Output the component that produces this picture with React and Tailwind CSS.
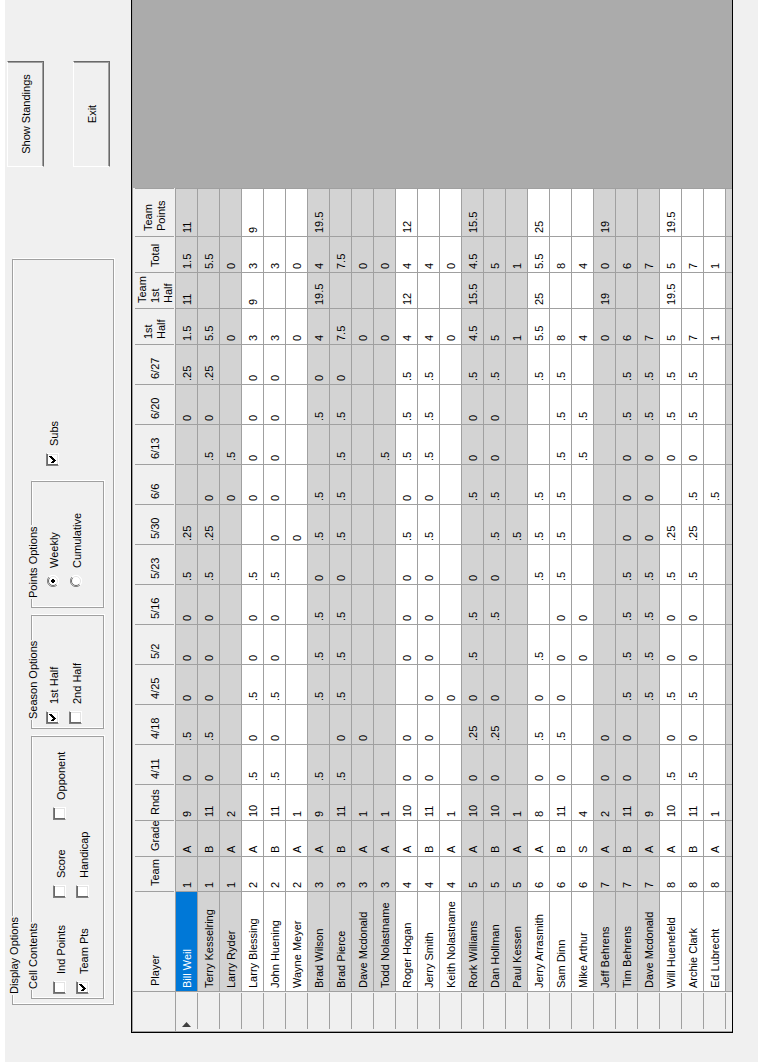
import React from 'react';

const HEADERS = [
  'Player', 'Team', 'Grade', 'Rnds', '4/11', '4/18', '4/25', '5/2', '5/16', '5/23', '5/30',
  '6/6', '6/13', '6/20', '6/27', '1st\nHalf', 'Team\n1st\nHalf', 'Total', 'Team\nPoints',
];

// name | team | grade | rounds | eleven weekly scores | half total | team total
const ROWS = [
  'Bill Weil|1|A|9|0,.5,0,0,0,.5,.25,,,0,.25|1.5|11',
  'Terry Kesselring|1|B|11|0,.5,0,0,0,.5,.25,0,.5,0,.25|5.5|',
  'Larry Ryder|1|A|2|,,,,,,,0,.5,,|0|',
  'Larry Blessing|2|A|10|.5,0,.5,0,0,.5,,0,0,0,0|3|9',
  'John Huening|2|B|11|.5,0,.5,0,0,.5,0,0,0,0,0|3|',
  'Wayne Meyer|2|A|1|,,,,,,0,,,,|0|',
  'Brad Wilson|3|A|9|.5,,.5,.5,.5,0,.5,.5,,.5,0|4|19.5',
  'Brad Pierce|3|B|11|.5,0,.5,.5,.5,0,.5,.5,.5,.5,0|7.5|',
  'Dave Mcdonald|3|A|1|,0,,,,,,,,,|0|',
  'Todd Nolastname|3|A|1|,,,,,,,,.5,,|0|',
  'Roger Hogan|4|A|10|0,0,,0,0,0,.5,0,.5,.5,.5|4|12',
  'Jerry Smith|4|B|11|0,0,0,0,0,0,.5,0,.5,.5,.5|4|',
  'Keith Nolastname|4|A|1|,,0,,,,,,,,|0|',
  'Rork Williams|5|A|10|0,.25,0,.5,.5,0,,.5,0,0,.5|4.5|15.5',
  'Dan Hollman|5|B|10|0,.25,0,,.5,0,.5,.5,0,0,.5|5|',
  'Paul Kessen|5|A|1|,,,,,,.5,,,,|1|',
  'Jerry Arrasmith|6|A|8|0,.5,0,.5,,.5,.5,.5,,,.5|5.5|25',
  'Sam Dinn|6|B|11|0,.5,0,0,0,.5,.5,.5,.5,.5,.5|8|',
  'Mike Arthur|6|S|4|,,,0,0,,,,.5,.5,|4|',
  'Jeff Behrens|7|A|2|0,0,,,,,,,,,|0|19',
  'Tim Behrens|7|B|11|0,0,.5,.5,.5,.5,0,0,0,.5,.5|6|',
  'Dave Mcdonald|7|A|9|,,.5,.5,.5,.5,0,0,0,.5,.5|7|',
  'Will Huenefeld|8|A|10|.5,0,.5,0,0,.5,.25,,0,.5,.5|5|19.5',
  'Archie Clark|8|B|11|.5,0,.5,0,0,.5,.25,.5,0,.5,.5|7|',
  'Ed Lubrecht|8|A|1|,,,,,,,.5,,,|1|',
].map((line) => {
  const [name, team, grade, rounds, weeks, half, teamHalf] = line.split('|');
  return { team: Number(team), cells: [name, team, grade, rounds, ...weeks.split(','), half, teamHalf, half, teamHalf] };
});

function Check({ id, label, checked = false }) {
  return (
    <div className="flex h-[13px] items-center gap-[7px]">
      <span className="relative block size-[13px] shrink-0">
        <input
          id={id}
          type="checkbox"
          defaultChecked={checked}
          className="peer block size-[13px] appearance-none border-t border-r border-b border-l border-t-[#808080] border-l-[#808080] border-r-white border-b-white bg-white shadow-[inset_1px_1px_0_#696969,inset_-1px_-1px_0_#e3e3e3]"
        />
        <svg viewBox="0 0 13 13" shapeRendering="crispEdges" className="pointer-events-none absolute inset-0 hidden size-[13px] peer-checked:block">
          <path d="M3 5h1v1h1v1h1v-1h1v-1h1v-1h1v-1h1v3h-1v1h-1v1h-1v1h-1v1h-1v-1h-1v-1h-1z" fill="#000" />
        </svg>
      </span>
      <label htmlFor={id} className="pt-1">{label}</label>
    </div>
  );
}

function Radio({ id, label, checked = false }) {
  return (
    <div className="flex h-[13px] items-center gap-[7px]">
      <span className="relative block size-3 shrink-0">
        <input id={id} name="points" type="radio" defaultChecked={checked} className="peer block size-3 appearance-none rounded-full bg-white" />
        <svg viewBox="0 0 12 12" fill="none" className="pointer-events-none absolute inset-0 size-3">
          <path d="M2 10A5.5 5.5 0 0 1 10 2" stroke="#808080" />
          <path d="M2.8 9.2A4.5 4.5 0 0 1 9.2 2.8" stroke="#696969" />
          <path d="M10 2A5.5 5.5 0 0 1 2 10" stroke="#fff" />
          <path d="M9.2 2.8A4.5 4.5 0 0 1 2.8 9.2" stroke="#e3e3e3" />
        </svg>
        <svg viewBox="0 0 12 12" className="pointer-events-none absolute inset-0 hidden size-3 peer-checked:block">
          <path d="M5 4h2v1h1v2h-1v1h-2v-1h-1v-2h1z" fill="#000" shapeRendering="crispEdges" />
        </svg>
      </span>
      <label htmlFor={id} className="pt-1">{label}</label>
    </div>
  );
}

function Group({ title, className, children }) {
  return (
    <fieldset className={'border border-[#a0a0a0] shadow-[1px_1px_0_#fff,inset_1px_1px_0_#fff] ' + className}>
      <legend className="h-[13px] bg-[#f0f0f0] px-px pt-0.5">{title}</legend>
      {children}
    </fieldset>
  );
}

function PushButton({ children }) {
  return (
    <button
      type="button"
      className="h-[37px] w-full border border-t-white border-l-white border-r-[#696969] border-b-[#696969] bg-[#f0f0f0] pt-px text-center shadow-[inset_-1px_-1px_0_#a0a0a0]"
    >
      {children}
    </button>
  );
}

function StandingsGrid() {
  return (
    <table className="w-[843px] table-fixed border-separate border-spacing-0 text-left">
      <colgroup>
        <col className="w-10" />
        <col className="w-[100px]" />
        <col className="w-[35px]" />
        <col className="w-9" />
        <col className="w-9" />
        {HEADERS.slice(4, 15).map((h) => (
          <col key={h} className="w-10" />
        ))}
        <col className="w-9" />
        <col className="w-9" />
        <col className="w-9" />
        <col className="w-12" />
      </colgroup>
      <thead>
        <tr className="bg-[#f0f0f0]">
          <td className="h-[43px] border-r border-b border-[#a0a0a0] p-0" />
          {HEADERS.map((h) => (
            <th key={h} scope="col" className="h-[43px] border-b border-[#a0a0a0] p-0 font-normal">
              <div className="flex h-[39px] items-center border-r border-[#a0a0a0] pt-0.5 pl-[5px] whitespace-pre">{h}</div>
            </th>
          ))}
        </tr>
      </thead>
      <tbody>
        {ROWS.map((row, r) => (
          <tr key={r} className={row.team % 2 ? 'bg-[#d3d3d3]' : 'bg-white'}>
            <td className="h-[22px] border-r border-[#a0a0a0] bg-[#f0f0f0] p-0">
              <div className="mr-px ml-0.5 flex h-[22px] items-center border-b border-[#a0a0a0] pl-0.5">
                {r === 0 && (
                  <svg viewBox="0 0 5 9" className="h-[9px] w-[5px]" aria-hidden="true">
                    <path d="M0 0L5 4.5L0 9z" fill="#404040" />
                  </svg>
                )}
              </div>
            </td>
            {row.cells.map((c, i) => (
              <td
                key={i}
                className={
                  'h-[22px] border-r border-b border-[#a0a0a0] pt-0.5 pr-0 pb-0 pl-[3px] whitespace-nowrap ' +
                  (r === 0 && i === 0 ? 'bg-[#0078d7] text-white' : '')
                }
              >
                {c}
              </td>
            ))}
          </tr>
        ))}
        <tr className="bg-[#d3d3d3]">
          <td className="h-1.5 border-r border-[#a0a0a0] bg-[#f0f0f0] p-0" />
          {HEADERS.map((h) => (
            <td key={h} className="h-1.5 border-r border-[#a0a0a0] p-0" />
          ))}
        </tr>
      </tbody>
    </table>
  );
}

export default function App() {
  return (
    <div className="h-screen w-screen overflow-hidden bg-[#f0f0f0]">
      {/* The form is laid out in landscape and turned a quarter turn to the left. */}
      <div className="flex h-[100vw] w-[100vh] origin-top-left [transform:rotate(-90deg)_translateX(-100%)] flex-col border-t-[5px] border-white bg-[#f0f0f0] font-['Liberation_Sans',Arial,sans-serif] text-[11px] leading-[13px] text-black">
        <div className="flex items-start gap-[92px] pt-px pr-[61px] pb-[17px] pl-[57px]">
          <Group title="Display Options" className="min-w-0 flex-1 pr-[5px] pb-[9px] pl-[9px]">
            <div className="-ml-1 flex items-start gap-[7px] pt-1.5">
              <Group title="Cell Contents" className="w-[263px] px-2 pb-3.5">
                <div className="-ml-1 grid grid-cols-[96px_78px_1fr] gap-y-2.5 pt-[15px]">
                  <Check id="ind" label="Ind Points" />
                  <Check id="score" label="Score" />
                  <Check id="opp" label="Opponent" />
                  <Check id="team" label="Team Pts" checked />
                  <Check id="handicap" label="Handicap" />
                </div>
              </Group>
              <Group title="Season Options" className="w-[114px] px-2 pb-[21px]">
                <div className="-ml-1 grid gap-y-2.5 pt-2">
                  <Check id="first" label="1st Half" checked />
                  <Check id="second" label="2nd Half" />
                </div>
              </Group>
              <Group title="Points Options" className="w-[127px] px-2 pb-[21px]">
                <div className="grid gap-y-2.5 pt-2 pl-3">
                  <Radio id="weekly" label="Weekly" checked />
                  <Radio id="cumulative" label="Cumulative" />
                </div>
              </Group>
              <div className="pt-[21px] pl-2">
                <Check id="subs" label="Subs" checked />
              </div>
            </div>
          </Group>
          <div className="flex w-[106px] flex-col gap-[29px] pt-px">
            <PushButton>Show Standings</PushButton>
            <PushButton>Exit</PushButton>
          </div>
        </div>
        <div className="ml-[29px] overflow-hidden border-y border-l border-black bg-[#ababab]">
          <div className="border-t border-l border-[#a0a0a0]">
            <StandingsGrid />
          </div>
        </div>
      </div>
    </div>
  );
}
